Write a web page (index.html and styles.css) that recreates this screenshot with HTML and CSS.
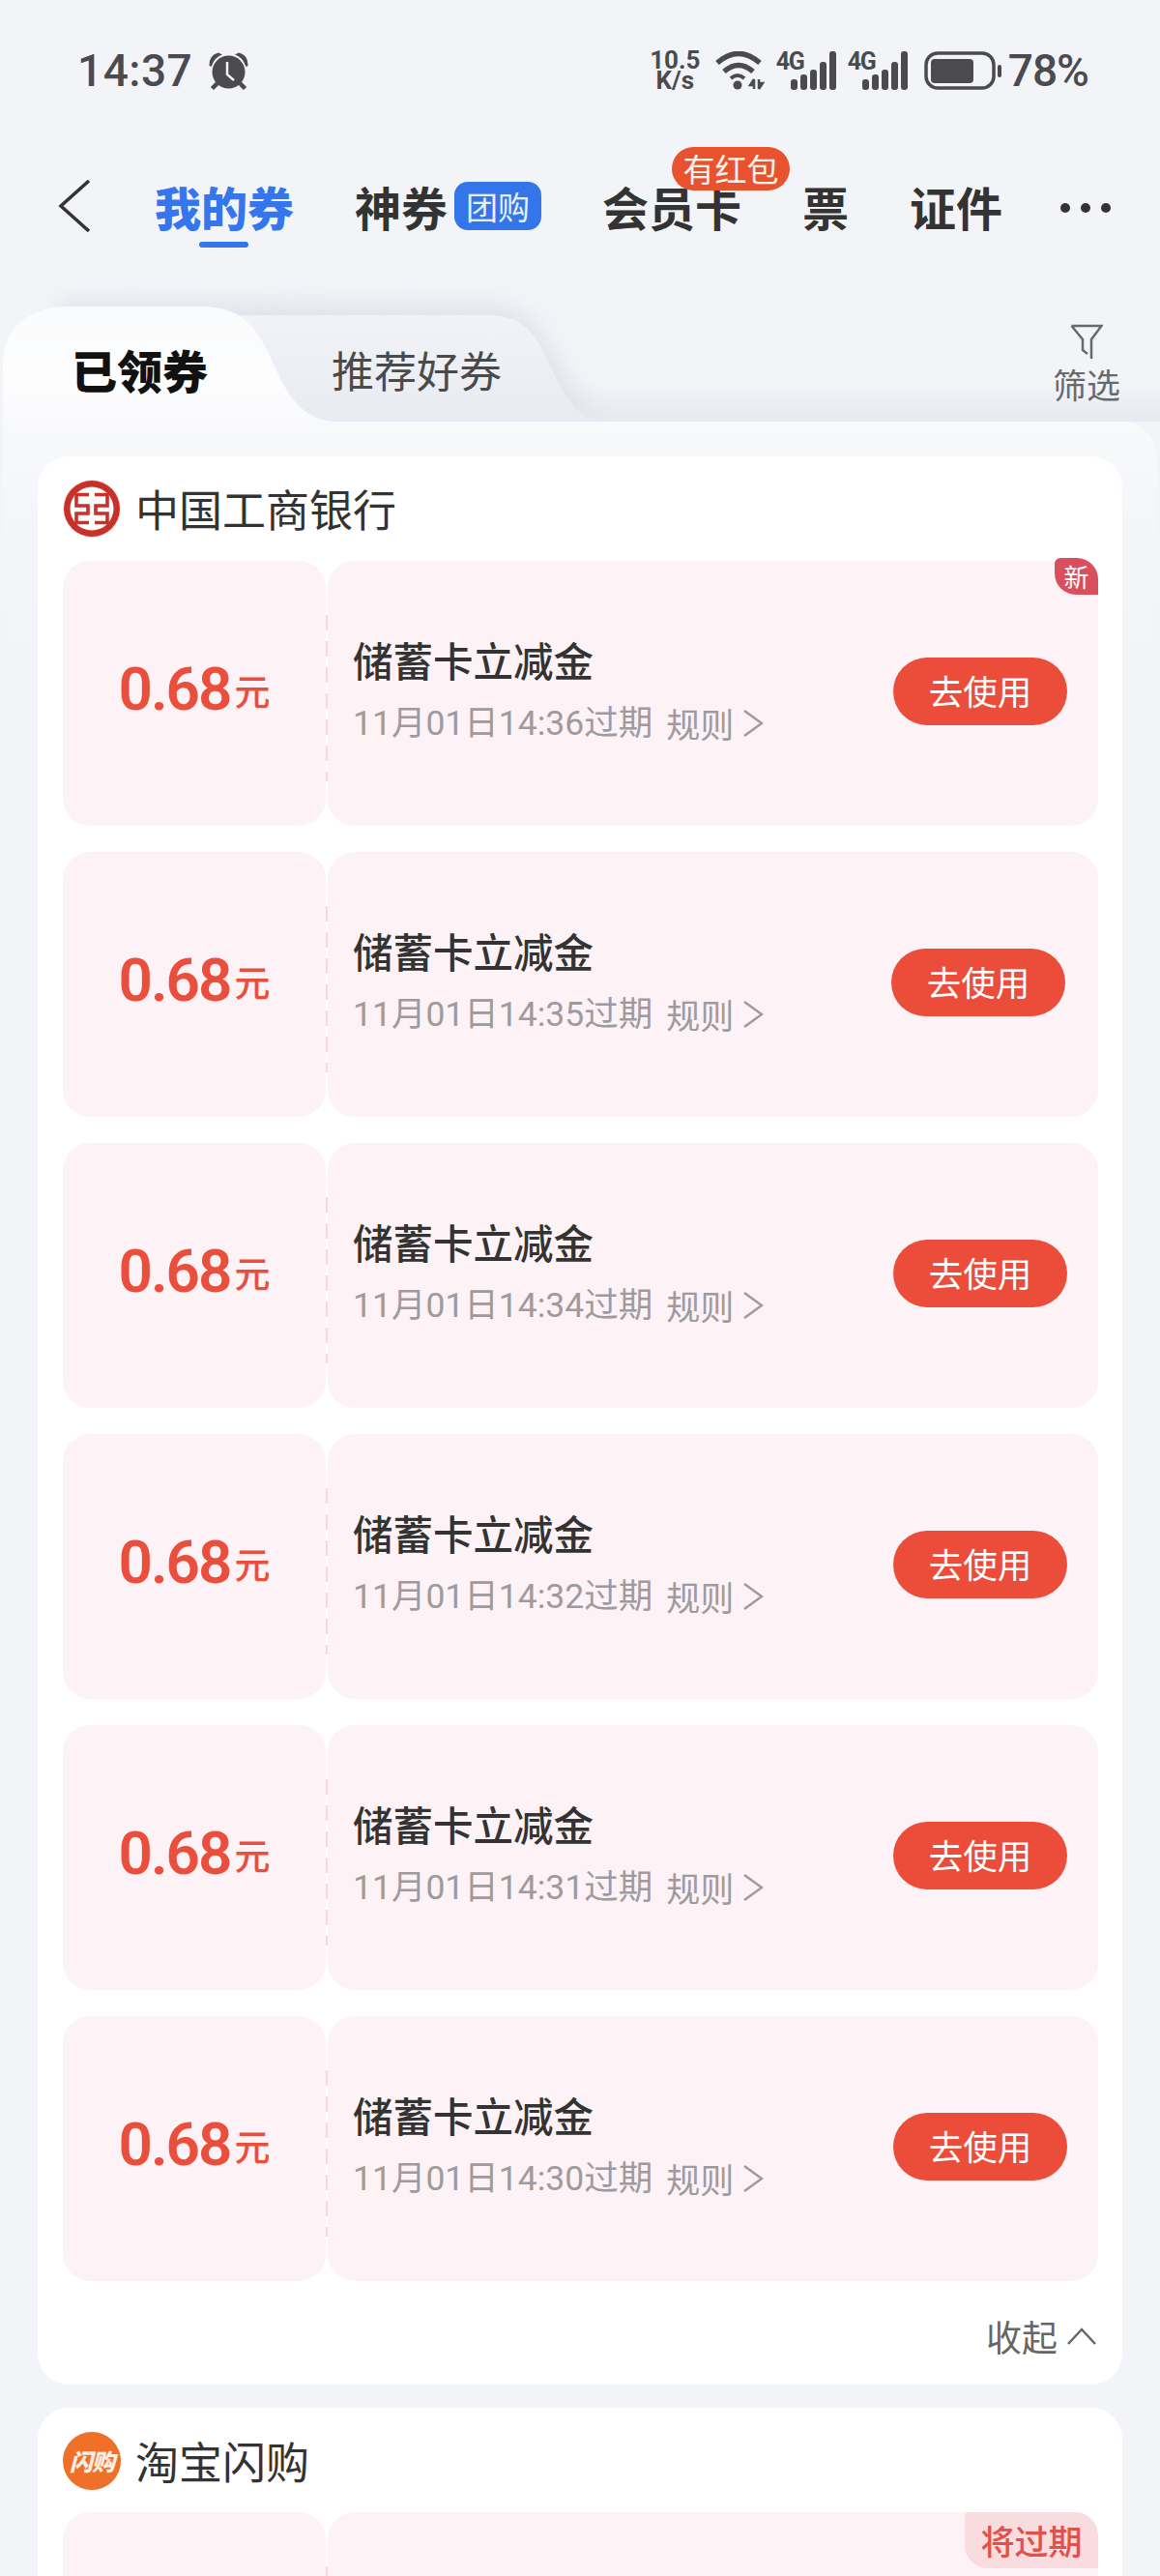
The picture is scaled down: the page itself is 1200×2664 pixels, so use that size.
FILE: index.html
```html
<!DOCTYPE html>
<html>
<head>
	<meta charset="utf-8">
	<title>我的券</title>
	<link rel="stylesheet" href="styles.css">
</head>
<body>
	<svg class="hidden-defs" width="0" height="0">
		<symbol id="chev-right" viewBox="0 0 22 30">
			<polyline points="2,2 20,15 2,28" fill="none" stroke="#9e9a9d" stroke-width="2.5"/>
		</symbol>
		<symbol id="bars" viewBox="0 0 47 40">
			<rect x="0" y="29" width="7" height="11" rx="3" fill="#4a4a4f"/>
			<rect x="10" y="24" width="7" height="16" rx="3" fill="#4a4a4f"/>
			<rect x="20" y="19" width="7" height="21" rx="3" fill="#4a4a4f"/>
			<rect x="30" y="11" width="7" height="29" rx="3" fill="#4a4a4f"/>
			<rect x="40" y="0" width="7" height="40" rx="3" fill="#4a4a4f"/>
		</symbol>
	</svg>

	<div class="page">
		<div class="status-bar">
			<span class="clock">14:37</span>
			<svg class="alarm" width="41" height="39" viewBox="0 0 41 39">
				<circle cx="20.5" cy="20.5" r="17" fill="#4a4a4f"/>
				<path d="M0.5 14 Q0 3 10 0.5 L14 2.5 Q6 5 2.5 15 Z" fill="#4a4a4f"/>
				<path d="M40.5 14 Q41 3 31 0.5 L27 2.5 Q35 5 38.5 15 Z" fill="#4a4a4f"/>
				<path d="M9 32 L3.5 37.5 M32 32 L37.5 37.5" stroke="#4a4a4f" stroke-width="4.5"/>
				<polyline points="19,10 19,23 26,29" fill="none" stroke="#f2f4f8" stroke-width="2.5"/>
			</svg>
			<div class="status-right">
				<div class="speed"><span>10.5</span><span>K/s</span></div>
				<svg class="wifi" width="52" height="40" viewBox="0 0 52 40">
					<path d="M3 12 Q25 -7 47 12" fill="none" stroke="#4a4a4f" stroke-width="5.5"/>
					<path d="M10 21 Q25 8 40 21" fill="none" stroke="#4a4a4f" stroke-width="5.5"/>
					<path d="M17 28 Q24 22 31 28" fill="none" stroke="#4a4a4f" stroke-width="4"/>
					<circle cx="24" cy="35" r="4.5" fill="#4a4a4f"/>
					<path d="M41 29 V39 M41 29 L37 35 H41 M46 29 V39 M46 39 L50 33 H46" fill="none" stroke="#4a4a4f" stroke-width="2.5"/>
				</svg>
				<div class="signal"><span class="net">4G</span><svg class="bars" width="47" height="40"><use href="#bars"/></svg></div>
				<div class="signal"><span class="net">4G</span><svg class="bars" width="47" height="40"><use href="#bars"/></svg></div>
				<svg class="battery" width="80" height="40" viewBox="0 0 80 40">
					<rect x="2" y="2" width="70" height="36" rx="12" fill="none" stroke="#4a4a4f" stroke-width="3.5"/>
					<rect x="7" y="8" width="44" height="25" rx="4" fill="#4a4a4f"/>
					<rect x="76" y="14" width="4" height="13" rx="2" fill="#4a4a4f"/>
				</svg>
				<span class="percent">78%</span>
			</div>
		</div>

		<div class="nav">
			<svg class="back" width="34" height="54" viewBox="0 0 34 54">
				<polyline points="32,1 3,27 32,53" fill="none" stroke="#333" stroke-width="3.5"/>
			</svg>
			<div class="nav-item active">我的券</div>
			<div class="nav-item">神券<span class="tuan">团购</span></div>
			<div class="nav-item has-tip">会员卡<span class="tip">有红包</span></div>
			<div class="nav-item">票</div>
			<div class="nav-item">证件</div>
			<div class="dots"><i></i><i></i><i></i></div>
		</div>

		<div class="tabs">
			<svg class="tabs-bg" width="1200" height="440" viewBox="0 284 1200 440">
				<defs>
					<linearGradient id="band" x1="0" y1="0" x2="0" y2="1">
						<stop offset="0" stop-color="#f2f4f8"/>
						<stop offset="1" stop-color="#e6e9ef"/>
					</linearGradient>
					<linearGradient id="tabTwo" x1="0" y1="0" x2="0" y2="1">
						<stop offset="0" stop-color="#f1f3f7"/>
						<stop offset="1" stop-color="#e8ebf1"/>
					</linearGradient>
					<linearGradient id="tabOne" gradientUnits="userSpaceOnUse" x1="0" y1="317" x2="0" y2="720">
						<stop offset="0" stop-color="#fafbfc"/>
						<stop offset="0.2" stop-color="#fdfdfe"/>
						<stop offset="0.32" stop-color="#f8f9fb"/>
						<stop offset="0.6" stop-color="#f3f5f9"/>
						<stop offset="1" stop-color="#f2f4f8"/>
					</linearGradient>
					<filter id="soft" x="-20%" y="-30%" width="140%" height="160%">
						<feGaussianBlur stdDeviation="12"/>
					</filter>
				</defs>
				<rect x="560" y="396" width="640" height="40" fill="url(#band)"/>
				<path d="M60 312 L505 314 C550 318 565 350 580 380 L620 436 L60 436 Z" fill="#e0e3ea" filter="url(#soft)"/>
				<path d="M230 326 L505 326 C545 326 556 350 570 380 C586 415 600 436 628 436 L230 436 Z" fill="url(#tabTwo)"/>
				<path d="M3 720 L3 375 C3 340 30 317 70 317 L210 317 C250 317 265 340 278 365 C295 405 310 436 350 436 L1160 436 C1182 436 1194 452 1197 472 L1197 720 Z" fill="url(#tabOne)"/>
			</svg>
			<div class="tab active">已领券</div>
			<div class="tab">推荐好券</div>
			<div class="filter">
				<svg width="34" height="37" viewBox="0 0 34 37">
					<path d="M1.5 2 H32.5 L22 16 V36 M1.5 2 L13 16 V27 L18 31" fill="none" stroke="#666a6f" stroke-width="2.5"/>
				</svg>
				<span>筛选</span>
			</div>
		</div>

		<div class="card">
			<div class="card-head">
				<svg class="logo" width="60" height="60" viewBox="0 0 60 60">
					<circle cx="30" cy="30" r="30" fill="#fbe9e6"/>
					<circle cx="30" cy="30" r="29" fill="#c9302a"/>
					<circle cx="30" cy="30" r="22.5" fill="#fff"/>
					<path d="M27 15.5 H14 V27 H26 V35 H14 V44.5 H27 M33 15.5 H46 V27 H34 V35 H46 V44.5 H33" fill="none" stroke="#c9302a" stroke-width="3.6"/>
				</svg>
				<span class="shop">中国工商银行</span>
			</div>
			<div class="coupons">
				<div class="coupon">
					<div class="amount"><b>0.68</b><span>元</span></div>
					<div class="detail">
						<div class="info">
							<div class="title">储蓄卡立减金</div>
							<div class="meta"><span>11月01日14:36过期</span><span class="rule">规则</span><svg class="rule-arrow" width="22" height="30"><use href="#chev-right"/></svg></div>
						</div>
						<div class="use">去使用</div>
						<div class="new">新</div>
					</div>
				</div>
				<div class="coupon">
					<div class="amount"><b>0.68</b><span>元</span></div>
					<div class="detail">
						<div class="info">
							<div class="title">储蓄卡立减金</div>
							<div class="meta"><span>11月01日14:35过期</span><span class="rule">规则</span><svg class="rule-arrow" width="22" height="30"><use href="#chev-right"/></svg></div>
						</div>
						<div class="use shifted">去使用</div>
					</div>
				</div>
				<div class="coupon">
					<div class="amount"><b>0.68</b><span>元</span></div>
					<div class="detail">
						<div class="info">
							<div class="title">储蓄卡立减金</div>
							<div class="meta"><span>11月01日14:34过期</span><span class="rule">规则</span><svg class="rule-arrow" width="22" height="30"><use href="#chev-right"/></svg></div>
						</div>
						<div class="use">去使用</div>
					</div>
				</div>
				<div class="coupon">
					<div class="amount"><b>0.68</b><span>元</span></div>
					<div class="detail">
						<div class="info">
							<div class="title">储蓄卡立减金</div>
							<div class="meta"><span>11月01日14:32过期</span><span class="rule">规则</span><svg class="rule-arrow" width="22" height="30"><use href="#chev-right"/></svg></div>
						</div>
						<div class="use">去使用</div>
					</div>
				</div>
				<div class="coupon">
					<div class="amount"><b>0.68</b><span>元</span></div>
					<div class="detail">
						<div class="info">
							<div class="title">储蓄卡立减金</div>
							<div class="meta"><span>11月01日14:31过期</span><span class="rule">规则</span><svg class="rule-arrow" width="22" height="30"><use href="#chev-right"/></svg></div>
						</div>
						<div class="use">去使用</div>
					</div>
				</div>
				<div class="coupon">
					<div class="amount"><b>0.68</b><span>元</span></div>
					<div class="detail">
						<div class="info">
							<div class="title">储蓄卡立减金</div>
							<div class="meta"><span>11月01日14:30过期</span><span class="rule">规则</span><svg class="rule-arrow" width="22" height="30"><use href="#chev-right"/></svg></div>
						</div>
						<div class="use">去使用</div>
					</div>
				</div>
			</div>
			<div class="card-foot">
				<span>收起</span>
				<svg width="30" height="18" viewBox="0 0 30 18">
					<polyline points="1,17 15,2 29,17" fill="none" stroke="#666" stroke-width="2.5"/>
				</svg>
			</div>
		</div>

		<div class="card second">
			<div class="card-head">
				<div class="logo-flash"><span>闪购</span></div>
				<span class="shop">淘宝闪购</span>
			</div>
			<div class="coupons">
				<div class="coupon">
					<div class="amount"></div>
					<div class="detail">
						<div class="expiring">将过期</div>
					</div>
				</div>
			</div>
		</div>
	</div>
</body>
</html>
```

FILE: styles.css
```css
html, body {
	margin: 0;
	padding: 0;
	background-color: #f2f4f8;
}

.hidden-defs {
	position: absolute;
}

.page {
	height: 2664px;
	overflow: hidden;
	font-family: "Noto Sans CJK SC", Roboto, sans-serif;
	color: #333;
}

/* status bar */
.status-bar {
	display: flex;
	align-items: center;
	height: 146px;
	padding: 0 74px 0 80px;
	color: #4a4a4f;
	font-family: Roboto, sans-serif;
}

.clock {
	font-size: 46px;
	line-height: 50px;
	font-weight: 500;
	letter-spacing: 0.5px;
}

.alarm {
	margin-left: 17px;
}

.status-right {
	display: flex;
	align-items: center;
	margin-left: auto;
}

.speed {
	display: flex;
	flex-direction: column;
	align-items: center;
	font-size: 26px;
	line-height: 21px;
	font-weight: 700;
	width: 53px;
}

.wifi {
	margin-left: 14px;
}

.signal {
	display: flex;
	align-items: flex-start;
	margin-left: 12px;
	width: 62px;
	height: 40px;
	position: relative;
}

.signal:first-of-type {
	margin-left: 10px;
}

.net {
	font-size: 25px;
	line-height: 22px;
	font-weight: 700;
	letter-spacing: -1.5px;
	width: 15px;
	white-space: nowrap;
}

.bars {
	margin-left: auto;
}

.battery {
	margin-left: 17px;
}

.percent {
	margin-left: 7px;
	font-size: 46px;
	line-height: 50px;
	font-weight: 500;
	letter-spacing: -1px;
}

/* top nav */
.nav {
	display: flex;
	align-items: center;
	gap: 63px;
	height: 134px;
	padding-left: 60px;
	font-size: 48px;
	font-weight: 700;
}

.back {
	margin-right: 3px;
}

.nav-item {
	position: relative;
	display: flex;
	align-items: center;
	line-height: 60px;
	white-space: nowrap;
}

.nav-item.active {
	color: #3575ee;
	font-weight: 900;
}

.nav-item.active::after {
	content: "";
	position: absolute;
	left: 46px;
	bottom: -13px;
	width: 51px;
	height: 6px;
	border-radius: 3px;
	background-color: #3575ee;
}

.tuan {
	margin-left: 7px;
	width: 90px;
	height: 50px;
	border-radius: 14px;
	background-color: #3575ea;
	color: #e8f0fe;
	font-size: 33px;
	font-weight: 400;
	line-height: 50px;
	text-align: center;
}

.tip {
	position: absolute;
	left: 72px;
	top: -31px;
	width: 122px;
	height: 45px;
	border-radius: 23px;
	background-color: #e8522e;
	color: #fdf1e8;
	font-size: 33px;
	font-weight: 400;
	line-height: 45px;
	text-align: center;
}

.dots {
	display: flex;
	gap: 11px;
	margin: 4px 0 0 -3px;
}

.dots i {
	width: 10px;
	height: 10px;
	border-radius: 50%;
	background-color: #333;
}

/* tabs */
.tabs {
	position: relative;
	display: flex;
	align-items: center;
	height: 156px;
	padding: 0 41px 0 74px;
}

.tabs-bg {
	position: absolute;
	left: 0;
	top: 4px;
}

.tab {
	position: relative;
	margin-top: 48px;
	font-size: 44px;
	line-height: 56px;
	color: #4a4a4a;
}

.tab.active {
	width: 269px;
	font-size: 47px;
	font-weight: 900;
	color: #111;
}

.filter {
	position: relative;
	display: flex;
	flex-direction: column;
	align-items: center;
	margin-left: auto;
	margin-top: 36px;
	color: #666a6f;
	font-size: 35px;
	line-height: 42px;
}

.filter span {
	margin-top: 4px;
}

/* cards */
.card {
	position: relative;
	margin: 36px 39px 0;
	border-radius: 32px;
	background-color: #fff;
}

.card.second {
	margin-top: 24px;
}

.card-head {
	display: flex;
	align-items: center;
	gap: 15px;
	height: 108px;
	padding: 0 27px 0 26px;
	box-sizing: border-box;
}

.second .card-head {
	padding-top: 2px;
}

.shop {
	font-size: 45px;
	line-height: 60px;
}

.logo-flash {
	display: flex;
	align-items: center;
	justify-content: center;
	width: 60px;
	height: 60px;
	border-radius: 50%;
	background-color: #ee7029;
	color: #fdeee0;
	font-size: 24px;
	font-weight: 900;
	font-style: italic;
	line-height: 60px;
}

.logo-flash span {
	letter-spacing: -1px;
}

.coupons {
	display: flex;
	flex-direction: column;
	gap: 27px;
	padding: 0 25px 0 26px;
}

.coupon {
	display: flex;
	gap: 2px;
	height: 274px;
}

.amount {
	width: 272px;
	padding-top: 93px;
	box-sizing: border-box;
	border-radius: 28px;
	background-color: #fdf2f6;
	color: #ea4e3c;
	line-height: 80px;
	text-align: center;
	font-family: Roboto, sans-serif;
}

.amount b {
	font-size: 62px;
	font-weight: 600;
	letter-spacing: -2px;
}

.amount span {
	margin-left: 4px;
	font-size: 37px;
	font-weight: 500;
	vertical-align: 4px;
	font-family: "Noto Sans CJK SC", sans-serif;
}

.detail {
	position: relative;
	flex: 1;
	display: flex;
	align-items: center;
	padding: 0 32px 4px 26px;
	box-sizing: border-box;
	border-radius: 28px;
	background-color: #fdf2f6;
}

.detail::before {
	content: "";
	position: absolute;
	left: -2px;
	top: 56px;
	width: 2px;
	height: 172px;
	background: repeating-linear-gradient(to bottom, #f8d6df 0, #f8d6df 16px, transparent 16px, transparent 27px);
}

.info {
	flex: 1;
	padding-bottom: 6px;
}

.title {
	font-size: 41.5px;
	font-weight: 500;
	line-height: 56px;
	color: #333;
}

.meta {
	display: flex;
	align-items: center;
	margin-top: 16px;
	font-family: Roboto, "Noto Sans CJK SC", sans-serif;
	font-size: 35.5px;
	line-height: 44px;
	color: #9e9a9d;
}

.rule {
	margin-left: 14px;
	font-family: "Noto Sans CJK SC", sans-serif;
	font-size: 35px;
}

.rule-arrow {
	margin-left: 9px;
}

.use {
	width: 180px;
	height: 70px;
	border-radius: 35px;
	background-color: #ec4d3b;
	color: #fff;
	font-size: 35.5px;
	line-height: 68px;
	text-align: center;
}

.use.shifted {
	margin-right: 2px;
}

.new {
	position: absolute;
	right: 0;
	top: -3px;
	width: 45px;
	height: 38px;
	border-radius: 6px 22px 0 22px;
	background-color: #d94f5e;
	color: #fff;
	font-size: 26px;
	line-height: 38px;
	text-align: center;
}

.expiring {
	position: absolute;
	right: 0;
	top: 0;
	width: 138px;
	height: 58px;
	border-radius: 4px 24px 0 24px;
	background-color: #f8dcdf;
	color: #e2504a;
	font-size: 35px;
	font-weight: 500;
	line-height: 58px;
	text-align: center;
}

.card-foot {
	display: flex;
	align-items: center;
	justify-content: flex-end;
	gap: 10px;
	height: 107px;
	padding: 6px 27px 0 0;
	box-sizing: border-box;
	color: #666;
	font-size: 37px;
	line-height: 46px;
}
```
